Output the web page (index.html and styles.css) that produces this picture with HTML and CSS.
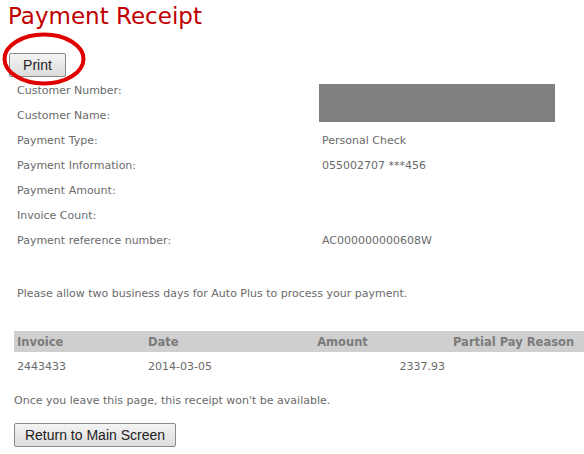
FILE: index.html
```html
<!DOCTYPE html>
<html lang="en">
<head>
    <meta charset="UTF-8">
    <title>Payment Receipt</title>
    <link rel="stylesheet" href="styles.css">
</head>
<body>
    <h1 class="titulo">Payment Receipt</h1>

    <div class="print-zone">
        <button class="btn btn-print">Print</button>
        <svg class="circulo" width="88" height="58" viewBox="0 0 88 58">
            <ellipse cx="43" cy="28" rx="39.5" ry="24.5" fill="none" stroke="#e00000" stroke-width="4"/>
        </svg>
    </div>

    <div class="detalle">
        <div class="etiqueta">Customer Number:</div>
        <div class="valor"></div>
        <div class="etiqueta">Customer Name:</div>
        <div class="valor"></div>
        <div class="etiqueta">Payment Type:</div>
        <div class="valor">Personal Check</div>
        <div class="etiqueta">Payment Information:</div>
        <div class="valor">055002707 ***456</div>
        <div class="etiqueta">Payment Amount:</div>
        <div class="valor"></div>
        <div class="etiqueta">Invoice Count:</div>
        <div class="valor"></div>
        <div class="etiqueta">Payment reference number:</div>
        <div class="valor">AC000000000608W</div>
        <div class="tapado"></div>
    </div>

    <p class="aviso">Please allow two business days for Auto Plus to process your payment.</p>

    <table class="facturas">
        <tr>
            <th class="c1">Invoice</th>
            <th class="c2">Date</th>
            <th class="c3">Amount</th>
            <th class="c4">Partial Pay Reason</th>
        </tr>
        <tr>
            <td>2443433</td>
            <td>2014-03-05</td>
            <td class="monto">2337.93</td>
            <td></td>
        </tr>
    </table>

    <p class="nota">Once you leave this page, this receipt won't be available.</p>

    <button class="btn btn-volver">Return to Main Screen</button>
</body>
</html>
```

FILE: styles.css
```css
body {
    margin: 0;
    padding: 0 0 0 14px;
    font-family: "DejaVu Sans", Verdana, sans-serif;
    font-size: 11px;
    color: #6a6a6a;
    background: #fff;
    overflow: hidden;
}
.titulo {
    margin: 0 0 0 -6px;
    padding-top: 1px;
    font-size: 23px;
    font-weight: normal;
    color: #c00000;
    line-height: 30px;
    height: 30px;
}
.print-zone {
    position: relative;
    height: 48px;
}
.btn {
    font-family: "Liberation Sans", Arial, sans-serif;
    font-size: 14px;
    color: #222;
    background: linear-gradient(#f4f4f4, #dcdcdc);
    border: 1px solid #8a8a8a;
    border-radius: 2px;
    padding: 0;
    height: 24px;
}
.btn-print {
    margin: 22px 0 0 -5px;
    width: 57px;
}
.circulo {
    position: absolute;
    left: -13px;
    top: 0;
}
.detalle {
    position: relative;
    display: grid;
    grid-template-columns: 305px 1fr;
    grid-auto-rows: 25px;
    padding-left: 3px;
    line-height: 25px;
    margin-top: -1px;
}
.tapado {
    position: absolute;
    left: 305px;
    top: 6px;
    width: 236px;
    height: 38px;
    background: #808080;
}
.aviso {
    margin: 34px 0 0 3px;
}
.facturas {
    margin-top: 31px;
    border-collapse: collapse;
    width: 570px;
}
.facturas th {
    background: #cfcfcf;
    color: #7b7b7b;
    font-weight: bold;
    font-size: 11.5px;
    height: 21px;
    padding: 0 3px;
    text-align: left;
}
.facturas td {
    height: 28px;
    padding: 0 3px;
}
.c1 { width: 125px; }
.c2 { width: 89px; }
.c3 { width: 199px; text-align: center !important; }
.facturas .monto { text-align: right; padding-right: 0; }
.facturas .c4 { padding-left: 8px; }
.nota {
    margin: 14px 0 0 0;
}
.btn-volver {
    margin-top: 16px;
    width: 162px;
}
```
